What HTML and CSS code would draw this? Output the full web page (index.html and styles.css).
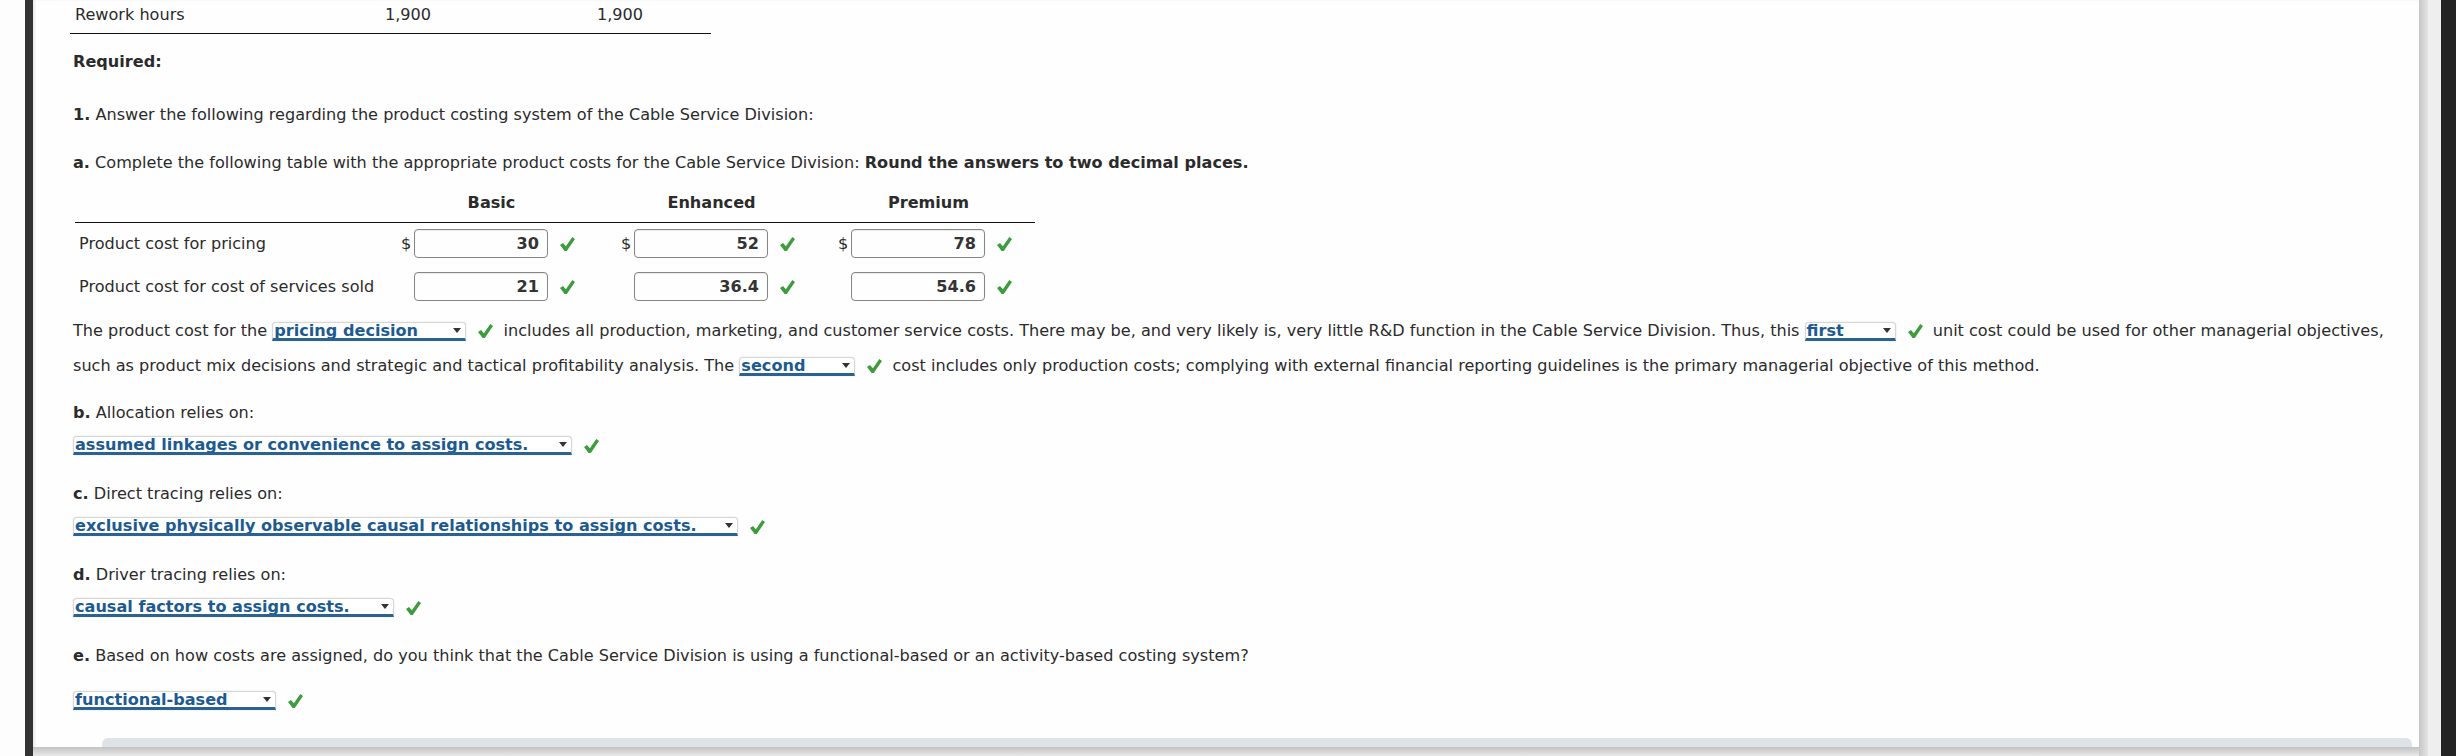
FILE: index.html
```html
<!DOCTYPE html>
<html lang="en">
<head>
  <meta charset="UTF-8" />
  <title>Cable Service Division - Product Costing</title>
  <link rel="stylesheet" href="styles.css">
</head>
<body>
  <div class="side-gap"></div>
  <div class="side-rail"></div>

  <main class="sheet">
    <div class="content">

      <!-- tail of the data table -->
      <div class="data-table">
        <div class="data-row">
          <span class="data-label">Rework hours</span>
          <span class="data-val">1,900</span>
          <span class="data-val">1,900</span>
        </div>
      </div>

      <p class="required">Required:</p>

      <p class="q-main"><b>1.</b> Answer the following regarding the product costing system of the Cable Service Division:</p>

      <p class="q-part"><b>a.</b> Complete the following table with the appropriate product costs for the Cable Service Division: <b>Round the answers to two decimal places.</b></p>

      <!-- Cost table -->
      <div class="cost-table">
        <div class="cost-head">
          <span></span>
          <span class="col"><span class="col-head">Basic</span></span>
          <span class="col"><span class="col-head">Enhanced</span></span>
          <span class="col"><span class="col-head">Premium</span></span>
        </div>
        <div class="cost-row first-row">
          <span class="row-label">Product cost for pricing</span>
          <span class="col"><span class="cur">$</span><span class="amount">30</span><svg class="tick" viewBox="0 0 15 14"><path d="M0 7.9 L3 6 L5.9 9.3 L12.3 0 L15 1.9 L6.8 14 L4.6 14 Z"/></svg></span>
          <span class="col"><span class="cur">$</span><span class="amount">52</span><svg class="tick" viewBox="0 0 15 14"><path d="M0 7.9 L3 6 L5.9 9.3 L12.3 0 L15 1.9 L6.8 14 L4.6 14 Z"/></svg></span>
          <span class="col"><span class="cur">$</span><span class="amount">78</span><svg class="tick" viewBox="0 0 15 14"><path d="M0 7.9 L3 6 L5.9 9.3 L12.3 0 L15 1.9 L6.8 14 L4.6 14 Z"/></svg></span>
        </div>
        <div class="cost-row">
          <span class="row-label">Product cost for cost of services sold</span>
          <span class="col"><span class="cur"></span><span class="amount">21</span><svg class="tick" viewBox="0 0 15 14"><path d="M0 7.9 L3 6 L5.9 9.3 L12.3 0 L15 1.9 L6.8 14 L4.6 14 Z"/></svg></span>
          <span class="col"><span class="cur"></span><span class="amount">36.4</span><svg class="tick" viewBox="0 0 15 14"><path d="M0 7.9 L3 6 L5.9 9.3 L12.3 0 L15 1.9 L6.8 14 L4.6 14 Z"/></svg></span>
          <span class="col"><span class="cur"></span><span class="amount">54.6</span><svg class="tick" viewBox="0 0 15 14"><path d="M0 7.9 L3 6 L5.9 9.3 L12.3 0 L15 1.9 L6.8 14 L4.6 14 Z"/></svg></span>
        </div>
      </div>

      <!-- Fill in the blanks -->
      <p class="fill-in">The product cost for the <span class="pick pick-pricing">pricing decision</span><svg class="tick tick-inline" viewBox="0 0 15 14"><path d="M0 7.9 L3 6 L5.9 9.3 L12.3 0 L15 1.9 L6.8 14 L4.6 14 Z"/></svg> includes all production, marketing, and customer service costs. There may be, and very likely is, very little R&amp;D function in the Cable Service Division. Thus, this <span class="pick pick-first">first</span><svg class="tick tick-inline" viewBox="0 0 15 14"><path d="M0 7.9 L3 6 L5.9 9.3 L12.3 0 L15 1.9 L6.8 14 L4.6 14 Z"/></svg> unit cost could be used for other managerial objectives,<br>such as product mix decisions and strategic and tactical profitability analysis. The <span class="pick pick-second">second</span><svg class="tick tick-inline" viewBox="0 0 15 14"><path d="M0 7.9 L3 6 L5.9 9.3 L12.3 0 L15 1.9 L6.8 14 L4.6 14 Z"/></svg> cost includes only production costs; complying with external financial reporting guidelines is the primary managerial objective of this method.</p>

      <p class="q-sub"><b>b.</b> Allocation relies on:</p>
      <div class="answer">
        <span class="pick pick-alloc">assumed linkages or convenience to assign costs.</span>
        <svg class="tick" viewBox="0 0 15 14"><path d="M0 7.9 L3 6 L5.9 9.3 L12.3 0 L15 1.9 L6.8 14 L4.6 14 Z"/></svg>
      </div>

      <p class="q-sub"><b>c.</b> Direct tracing relies on:</p>
      <div class="answer">
        <span class="pick pick-direct">exclusive physically observable causal relationships to assign costs.</span>
        <svg class="tick" viewBox="0 0 15 14"><path d="M0 7.9 L3 6 L5.9 9.3 L12.3 0 L15 1.9 L6.8 14 L4.6 14 Z"/></svg>
      </div>

      <p class="q-sub"><b>d.</b> Driver tracing relies on:</p>
      <div class="answer">
        <span class="pick pick-driver">causal factors to assign costs.</span>
        <svg class="tick" viewBox="0 0 15 14"><path d="M0 7.9 L3 6 L5.9 9.3 L12.3 0 L15 1.9 L6.8 14 L4.6 14 Z"/></svg>
      </div>

      <p class="q-sub"><b>e.</b> Based on how costs are assigned, do you think that the Cable Service Division is using a functional-based or an activity-based costing system?</p>
      <div class="answer answer-last">
        <span class="pick pick-system">functional-based</span>
        <svg class="tick" viewBox="0 0 15 14"><path d="M0 7.9 L3 6 L5.9 9.3 L12.3 0 L15 1.9 L6.8 14 L4.6 14 Z"/></svg>
      </div>
    </div>

    <div class="footer-bar"></div>
    <div class="sheet-edge"></div>
  </main>

  <div class="scroll-shadow"></div>
  <div class="scroll-track"></div>
  <div class="side-dark"></div>
</body>
</html>
```

FILE: styles.css
```css
/* Base */
* {
  margin: 0;
  padding: 0;
  box-sizing: border-box;
}

body {
  display: flex;
  height: 756px;
  overflow: hidden;
  background: #fdfdfd;
  font-family: "DejaVu Sans", Verdana, sans-serif;
  font-size: 16.1px;
  line-height: 20px;
  color: #2b2b2b;
}

/* Window frame around the sheet */
.side-gap {
  width: 25px;
  background: #fdfdfd;
}

.side-rail {
  width: 8px;
  background: #333;
}

.scroll-shadow {
  width: 9px;
  background: linear-gradient(to right, #c6c6c6, #e4e4e4);
}

.scroll-track {
  width: 13px;
  background: #eeeeee;
}

.side-dark {
  width: 15px;
  background: #232323;
}

.sheet {
  flex: 1;
  display: flex;
  flex-direction: column;
  background: #fefefe;
  box-shadow: inset 2px 0 2px rgba(0,0,0,0.08);
}

.content {
  padding-left: 40px;
}

.footer-bar {
  margin-top: auto;
  margin-left: 69px;
  margin-right: 7px;
  height: 9px;
  background: #dde3e6;
  border-radius: 6px 6px 0 0;
}

.sheet-edge {
  height: 9px;
  background: linear-gradient(#c2c2c2, #e9e9e9);
}

/* Data table (top) */
.data-table {
  width: 641px;
  margin-left: -3px;
}

.data-row {
  display: grid;
  grid-template-columns: 310px 212px 1fr;
  padding: 5px 0 8px 5px;
  border-bottom: 1px solid #111;
}

/* Question text */
.required {
  margin-top: 18px;
  font-weight: bold;
}

.q-main {
  margin-top: 33px;
}

.q-part {
  margin-top: 28px;
}

/* Cost table */
.cost-table {
  width: 960px;
  margin-left: 2px;
  margin-top: 20px;
}

.cost-head,
.cost-row {
  display: grid;
  grid-template-columns: 326px 220px 217px 197px;
  align-items: center;
}

.cost-head {
  padding-bottom: 9px;
  border-bottom: 1px solid #111;
  font-weight: bold;
}

.col-head {
  display: inline-block;
  width: 181px;
  text-align: center;
}

.cost-row {
  padding-top: 6px;
}

.cost-row.first-row {
  padding-bottom: 8px;
}

.row-label {
  padding-left: 4px;
}

.col {
  display: flex;
  align-items: center;
}

.cur {
  width: 13px;
}

.amount {
  width: 134px;
  height: 29px;
  padding-right: 8px;
  border: 1px solid #858585;
  border-radius: 4px;
  box-shadow: inset 0 1px 1px rgba(0,0,0,0.08);
  text-align: right;
  font-weight: bold;
  line-height: 27px;
  color: #333;
}

.tick {
  width: 15px;
  height: 14px;
  margin-left: 12px;
  fill: #3d9c3d;
  flex-shrink: 0;
}

.tick-inline {
  margin: 0 5px 0 12px;
  vertical-align: -2px;
}

/* Dropdown answers */
.pick {
  position: relative;
  display: inline-block;
  height: 19px;
  padding: 0 22px 0 1px;
  border: 1px solid #d6d6d6;
  border-bottom: 3px solid #2a6392;
  border-radius: 4px 4px 0 0;
  box-shadow: 0 0 2px rgba(0,0,0,0.12);
  background: #fff;
  color: #1d5a91;
  font-weight: bold;
  line-height: 15px;
  vertical-align: middle;
  white-space: nowrap;
  overflow: hidden;
}

.pick::after {
  content: "";
  position: absolute;
  right: 4px;
  top: 5px;
  border-left: 4px solid transparent;
  border-right: 4px solid transparent;
  border-top: 5px solid #333;
}

.pick-pricing { width: 194px; }
.pick-first { width: 91px; }
.pick-second { width: 116px; }
.pick-alloc { width: 499px; }
.pick-direct { width: 665px; }
.pick-driver { width: 321px; }
.pick-system { width: 203px; }

.fill-in {
  margin-top: 12px;
  line-height: 35px;
}

.q-sub {
  margin-top: 20px;
}

.answer {
  display: flex;
  align-items: center;
  margin-top: 13px;
}

.answer + .q-sub {
  margin-top: 29px;
}

.answer-last {
  margin-top: 25px;
}
```
